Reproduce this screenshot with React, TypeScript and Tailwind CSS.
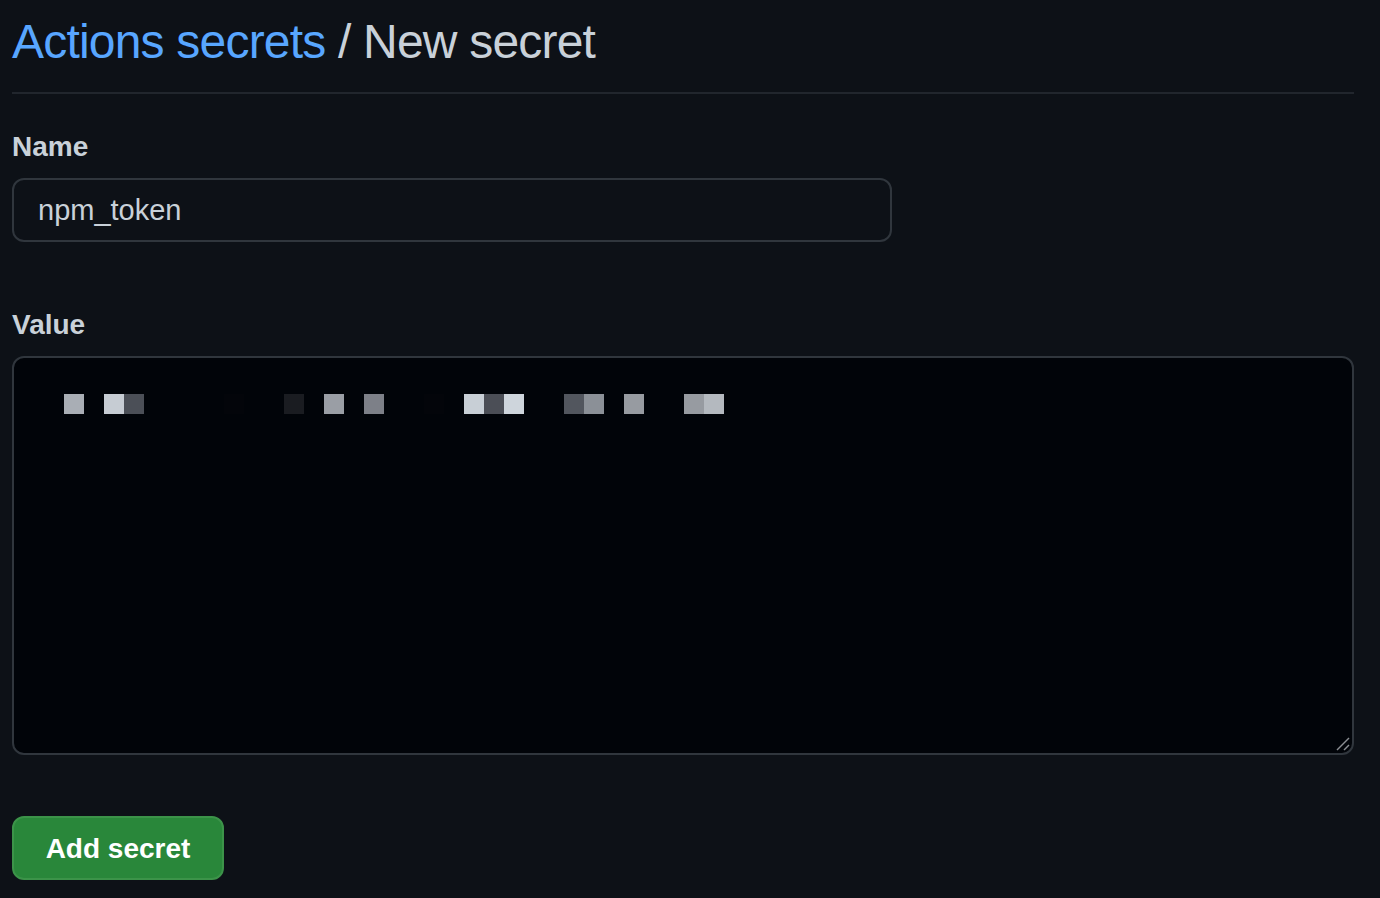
import React from "react";

const cells: (string | null)[] = [
  "#a9aeb5", null, "#c6ccd3", "#4b4f57", null, null, null, null, "#03050a", null, null,
  "#1a1c21", null, "#9a9ea5", null, "#7d8088", null, null, "#03050a", null,
  "#c8cfd6", "#4b4e56", "#ced5dc", null, null, "#52565e", "#8b9097", null, "#979ba1",
  null, null, "#979ba1", "#b4b9bf",
];

export default function App() {
  return (
    <div
      className="min-h-[898px] w-full bg-[#0d1117] pl-[12px] pr-[26px]"
      style={{ fontFamily: '"Liberation Sans", Arial, sans-serif' }}
    >
      <div className="pt-[6px] pb-[14px] border-b-2 border-[#21262d]">
        <h1 className="text-[48px] leading-[72px] font-normal tracking-[-0.8px] text-[#c9d1d9]">
          <span className="text-[#58a6ff]">Actions secrets</span> / New secret
        </h1>
      </div>

      <div className="pt-[32px]">
        <label className="block text-[28px] leading-[42px] font-bold text-[#c9d1d9] mb-[10px]">
          Name
        </label>
        <div className="w-[880px] h-[64px] border-2 border-[#30363d] rounded-[12px] bg-[#0d1117] flex items-center px-[24px]">
          <span className="text-[29px] text-[#c9d1d9] pt-[2px]">npm_token</span>
        </div>
      </div>

      <div className="pt-[62px]">
        <label className="block text-[28px] leading-[42px] font-bold text-[#c9d1d9] mb-[10px]">
          Value
        </label>
        <div className="relative h-[399px] border-2 border-[#30363d] rounded-[12px] bg-[#010409] pt-[36px] pl-[50px]">
          <div className="flex">
            {cells.map((c, i) => (
              <div
                key={i}
                className="w-[20px] h-[20px]"
                style={{ backgroundColor: c ?? "transparent" }}
              />
            ))}
          </div>
          <svg
            className="absolute right-[2px] bottom-[2px]"
            width="14"
            height="14"
            viewBox="0 0 14 14"
          >
            <line x1="1" y1="13" x2="13" y2="1" stroke="#8b8e93" strokeWidth="1.5" />
            <line x1="8" y1="13" x2="13" y2="8" stroke="#8b8e93" strokeWidth="1.5" />
          </svg>
        </div>
      </div>

      <div className="pt-[61px]">
        <button className="h-[64px] w-[212px] rounded-[12px] bg-[#29873a] border-2 border-[#3c9349] text-white text-[28px] font-bold pt-[2px]">
          Add secret
        </button>
      </div>
    </div>
  );
}
